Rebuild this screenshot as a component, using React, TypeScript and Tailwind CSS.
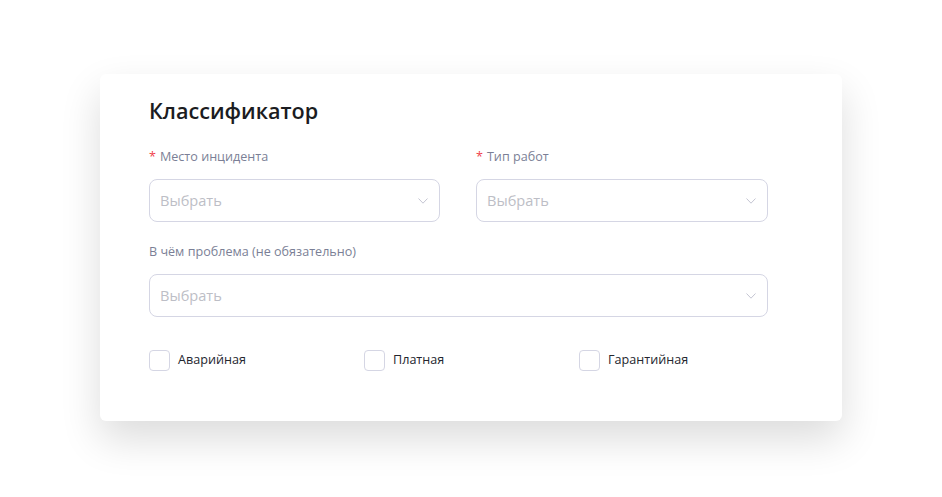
function Select({ label, required }: { label?: string; required?: boolean }) {
    return (
        <div className="flex flex-col">
            {label && (
                <div className="h-[19px] text-[12.6px] leading-[19px] text-[#7b7f96] mb-[13px]">
                    {required && <span className="text-[#f0414b] mr-[4px]">*</span>}
                    {label}
                </div>
            )}
            <div className="h-[43px] rounded-[8px] border border-[#d5d6e4] bg-white flex items-center justify-between pl-[10px] pr-[11px]">
                <span className="text-[14.6px] text-[#bdbec6]">Выбрать</span>
                <svg width="10" height="6" viewBox="0 0 10 6" fill="none" className="text-[#c4c5d2]">
                    <path d="M0.5 0.5 L5 5.2 L9.5 0.5" stroke="currentColor" strokeWidth="1" />
                </svg>
            </div>
        </div>
    );
}

function Check({ label }: { label: string }) {
    return (
        <label className="w-[215px] shrink-0 flex items-center gap-[8px]">
            <span className="w-[21px] h-[21px] rounded-[4px] border border-[#d5d6e4] bg-white" />
            <span className="text-[12.6px] text-[#24262e]">{label}</span>
        </label>
    );
}

export default function App() {
    return (
        <div className="w-[942px] h-[497px] bg-white pt-[74px] pl-[100px]" style={{ fontFamily: '"Open Sans", "Noto Sans", sans-serif' }}>
            <div className="w-[742px] h-[347px] bg-white rounded-[6px] shadow-[0_18px_40px_rgba(0,0,0,0.14)] pl-[49px] pr-[74px] pt-[22px]">
                <h2 className="text-[21.6px] leading-[30px] font-semibold text-[#1b1c21]">Классификатор</h2>
                <div className="grid grid-cols-[291px_292px] gap-x-[36px] mt-[21px]">
                    <Select label="Место инцидента" required />
                    <Select label="Тип работ" required />
                </div>
                <div className="mt-[20px]">
                    <Select label="В чём проблема (не обязательно)" />
                </div>
                <div className="flex mt-[33px]">
                    <Check label="Аварийная" />
                    <Check label="Платная" />
                    <Check label="Гарантийная" />
                </div>
            </div>
        </div>
    );
}
